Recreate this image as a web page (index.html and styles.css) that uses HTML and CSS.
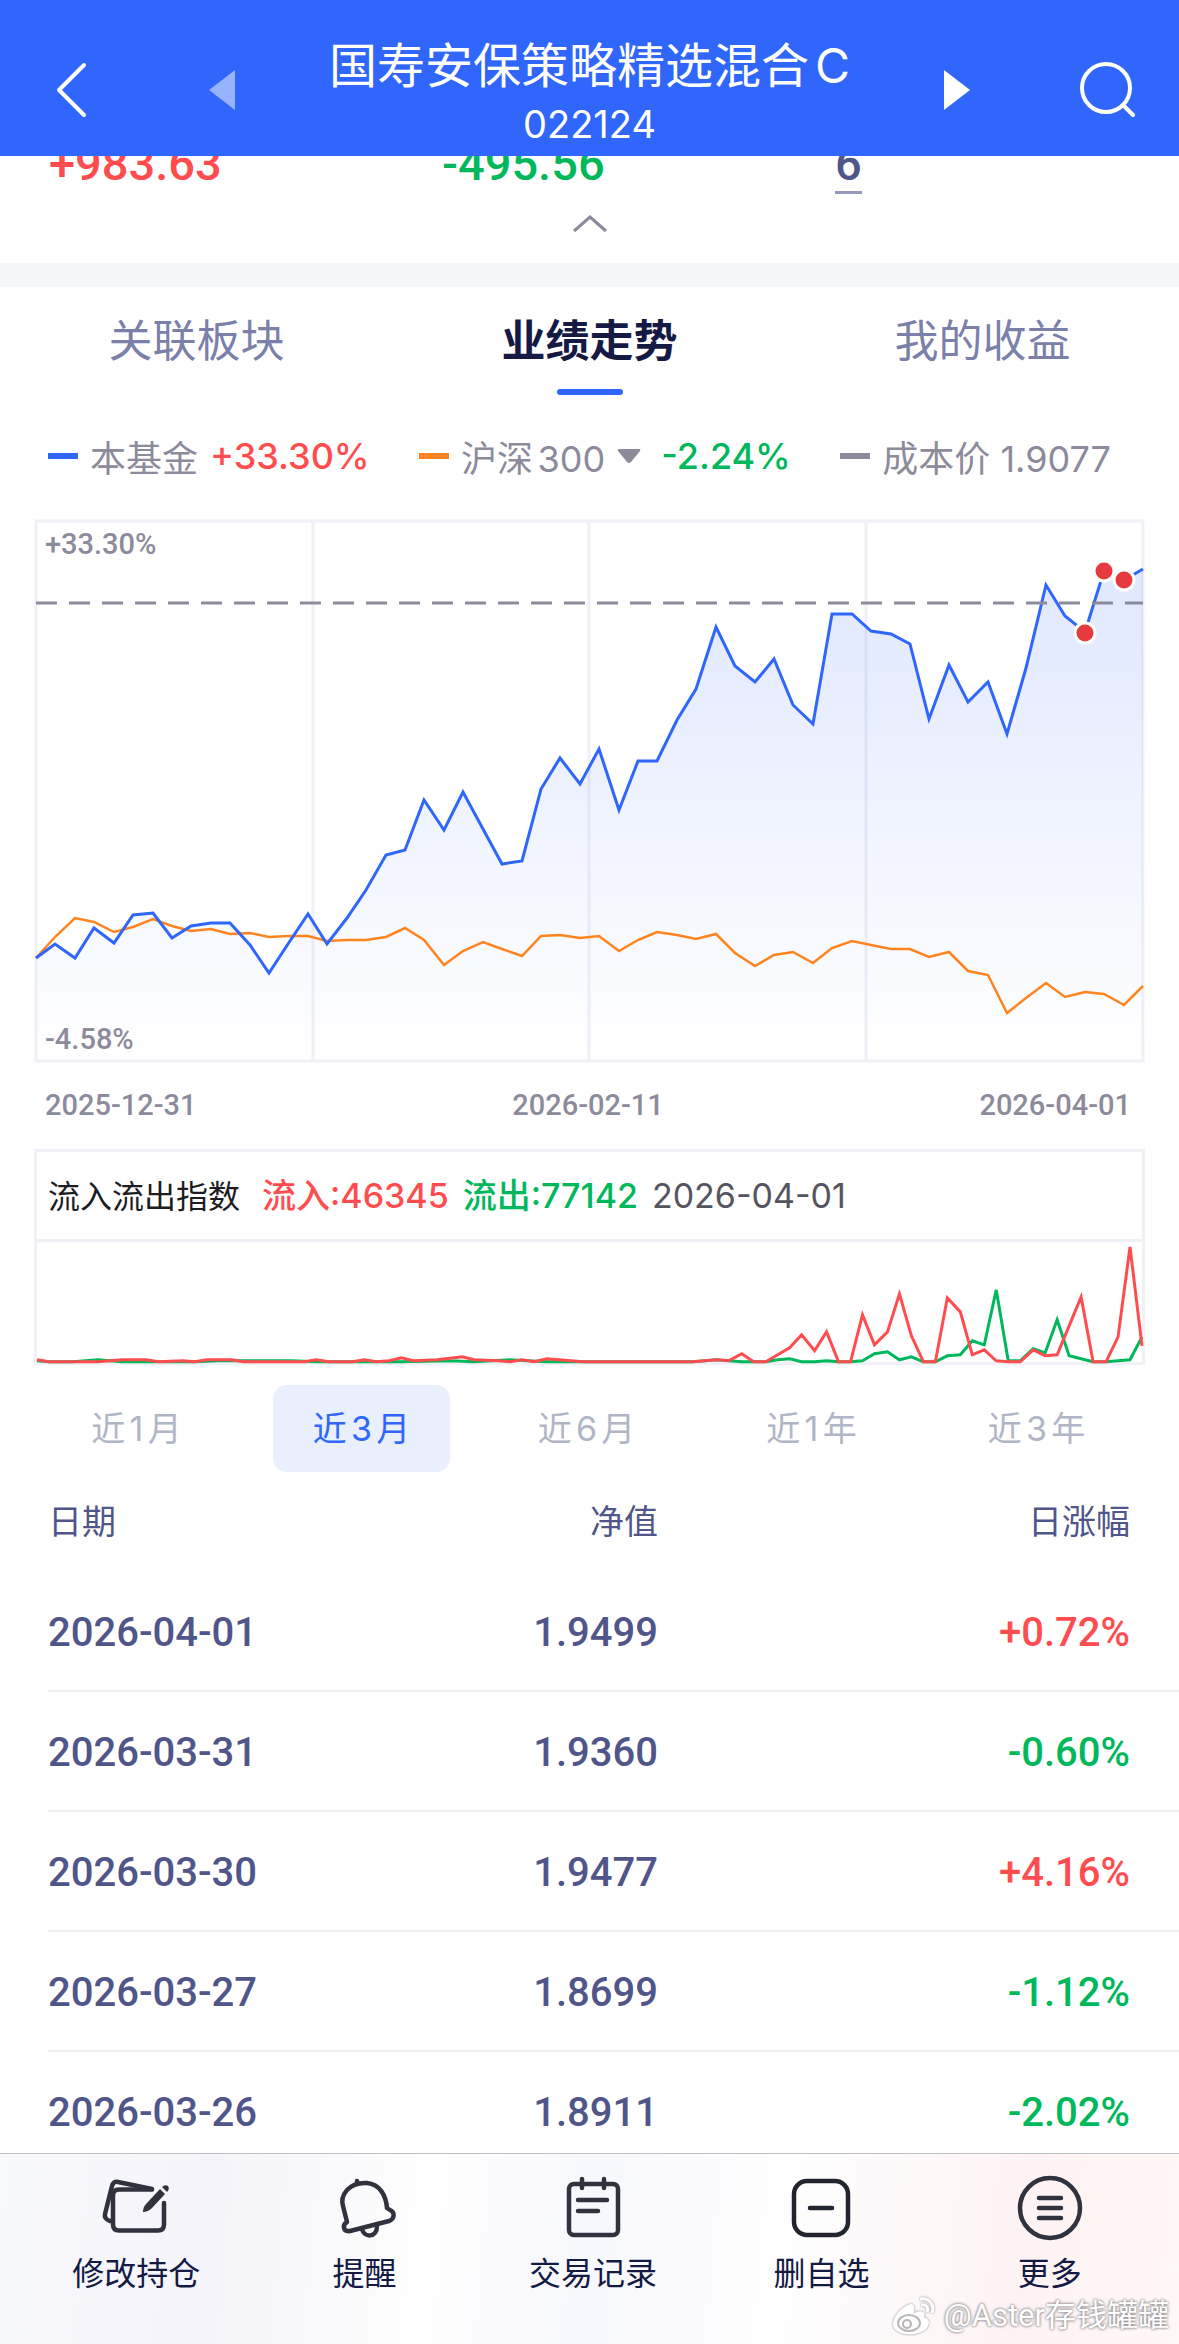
FILE: index.html
```html
<!DOCTYPE html>
<html lang="zh-CN">
<head>
    <meta charset="UTF-8">
    <meta name="viewport" content="width=device-width, initial-scale=1.0">
    <title>国寿安保策略精选混合C</title>
    <link rel="stylesheet" href="styles.css">
</head>
<body>
    <header class="top-bar">
        <button class="icon-btn" aria-label="返回">
            <svg width="60" height="60" viewBox="0 0 60 60"><path d="M42 5 17 30l25 25" fill="none" stroke="#fff" stroke-width="4" stroke-linecap="round" stroke-linejoin="round"/></svg>
        </button>
        <button class="icon-btn prev" aria-label="上一只">
            <svg width="28" height="40" viewBox="0 0 28 40"><path d="M27 0v40L1 20z" fill="#fff"/></svg>
        </button>
        <div class="fund-title">
            <h1>国寿安保策略精选混合C</h1>
            <p>022124</p>
        </div>
        <button class="icon-btn" aria-label="下一只">
            <svg width="28" height="40" viewBox="0 0 28 40"><path d="M1 0v40l26-20z" fill="#fff"/></svg>
        </button>
        <button class="icon-btn search" aria-label="搜索">
            <svg width="60" height="60" viewBox="0 0 60 60"><g fill="none" stroke="#fff" stroke-width="4" stroke-linecap="round"><circle cx="29" cy="28" r="24"/><path d="M46 45l10 10"/></g></svg>
        </button>
    </header>

    <main>
        <section class="holding">
            <div class="holding-values">
                <span class="up">+983.63</span>
                <span class="down">-495.56</span>
                <span><a href="#" class="days">6</a></span>
            </div>
            <button class="fold-btn" aria-label="收起">
                <svg width="36" height="20" viewBox="0 0 36 20"><path d="M2 17 18 3l16 14" fill="none" stroke="#8c8b9b" stroke-width="3"/></svg>
            </button>
        </section>

        <nav class="tabs">
            <a href="#" class="tab">关联板块</a>
            <a href="#" class="tab active">业绩走势</a>
            <a href="#" class="tab">我的收益</a>
        </nav>

        <div class="legend">
            <div class="legend-item"><i class="line blue"></i>本基金 <b class="up">+33.30%</b></div>
            <div class="legend-item"><i class="line orange"></i>沪深300 <svg class="caret" width="24" height="16" viewBox="0 0 24 16"><path d="M2 1h20q2 0 1 2L14 14q-2 2-4 0L1 3q-1-2 1-2z" fill="#8c8b9b"/></svg> <b class="down index-rate">-2.24%</b></div>
            <div class="legend-item"><i class="line gray"></i>成本价 1.9077</div>
        </div>

        <section class="trend">
            <svg class="trend-chart" viewBox="0 0 1107 540">
                <defs>
                    <linearGradient id="fill" x1="0" y1="0" x2="0" y2="1">
                        <stop offset="0" stop-color="#3366ff" stop-opacity="0.15"/>
                        <stop offset="0.7" stop-color="#3366ff" stop-opacity="0.045"/>
                        <stop offset="1" stop-color="#3366ff" stop-opacity="0"/>
                    </linearGradient>
                </defs>
                <path d="M0 0H1107V540H0zM277 0V540M553 0V540M830 0V540" fill="none" stroke="#f0f0f7" stroke-width="3"/>
                <polygon fill="url(#fill)" points="0,437 19,423 39,437 58,407 78,422 97,394 117,392 136,417 155,405 175,402 194,402 214,424 233,452 252,423 272,393 291,423 311,397 330,369 350,334 369,329 388,279 408,309 427,271 447,308 466,343 486,340 505,268 524,237 544,263 563,228 583,289 602,240 621,240 641,199 660,168 680,106 699,145 719,161 738,138 757,184 777,203 796,93 816,93 835,110 855,113 874,123 893,198 913,144 932,181 952,161 971,213 990,147 1010,64 1029,95 1049,111 1068,50 1088,59 1107,48 1107,540 0,540"/>
                <polyline class="plot" stroke="#ff8420" stroke-width="2.5" points="0,437 19,416 39,397 58,401 78,411 97,406 117,398 136,405 155,410 175,408 194,413 214,412 233,416 252,415 272,415 291,420 311,419 330,419 350,416 369,407 388,419 408,444 427,430 447,421 466,428 486,435 505,415 524,414 544,417 563,415 583,430 602,419 621,411 641,414 660,418 680,413 699,432 719,445 738,434 757,431 777,442 796,427 816,420 835,424 855,428 874,428 893,436 913,431 932,450 952,454 971,492 990,477 1010,462 1029,476 1049,471 1068,473 1088,484 1107,465"/>
                <polyline class="plot" stroke="#2f66fb" stroke-width="3" points="0,437 19,423 39,437 58,407 78,422 97,394 117,392 136,417 155,405 175,402 194,402 214,424 233,452 252,423 272,393 291,423 311,397 330,369 350,334 369,329 388,279 408,309 427,271 447,308 466,343 486,340 505,268 524,237 544,263 563,228 583,289 602,240 621,240 641,199 660,168 680,106 699,145 719,161 738,138 757,184 777,203 796,93 816,93 835,110 855,113 874,123 893,198 913,144 932,181 952,161 971,213 990,147 1010,64 1029,95 1049,111 1068,50 1088,59 1107,48"/>
                <path d="M0 82H1107" stroke="#8c8b9b" stroke-width="3" stroke-dasharray="21 12"/>
                <g fill="#e53b3f" stroke="#fff" stroke-width="3">
                    <circle cx="1049" cy="112" r="10"/>
                    <circle cx="1068" cy="50" r="10"/>
                    <circle cx="1088" cy="59" r="10"/>
                </g>
            </svg>
            <span class="scale scale-top">+33.30%</span>
            <span class="scale scale-bottom">-4.58%</span>
        </section>
        <div class="dates">
            <span>2025-12-31</span>
            <span>2026-02-11</span>
            <span>2026-04-01</span>
        </div>

        <section class="flow">
            <div class="flow-head">
                <span class="flow-name">流入流出指数</span>
                <span class="flow-num up">流入:46345</span>
                <span class="flow-num down">流出:77142</span>
                <span>2026-04-01</span>
            </div>
            <svg class="flow-chart" viewBox="0 0 1107 120">
                <polyline class="plot" stroke="#00b85c" stroke-width="3" points="0,119 12,120 36,120 61,118 85,120 158,120 182,119 231,119 255,119 280,120 316,120 365,120 414,119 438,120 474,118 510,120 560,120 657,120 669,119 681,118 693,119 706,120 730,120 742,118 754,117 766,120 779,120 791,119 803,120 815,120 827,119 839,112 852,110 864,118 876,115 888,120 900,120 912,114 925,113 937,99 949,103 961,48 973,119 985,119 998,107 1010,111 1022,78 1034,114 1046,117 1058,120 1071,120 1083,119 1095,118 1107,95"/>
                <polyline class="plot" stroke="#ff4d4f" stroke-width="3" points="0,118 12,120 61,120 73,119 85,118 109,118 122,120 146,119 158,120 170,118 195,118 207,120 268,120 280,118 292,120 316,120 328,118 340,120 353,119 365,116 377,119 401,118 426,115 438,118 462,119 474,120 486,118 498,120 511,117 523,118 547,120 657,120 669,119 681,118 693,119 706,112 718,120 730,120 742,113 754,106 766,93 779,109 791,90 803,120 815,120 827,73 839,103 852,90 864,52 876,94 888,120 900,120 912,56 925,70 937,113 949,108 961,119 973,120 985,120 998,108 1010,114 1022,113 1034,84 1046,55 1058,120 1071,120 1083,95 1095,5 1107,104"/>
            </svg>
        </section>

        <div class="ranges">
            <button class="range">近1月</button>
            <button class="range active">近3月</button>
            <button class="range">近6月</button>
            <button class="range">近1年</button>
            <button class="range">近3年</button>
        </div>

        <table class="history">
            <thead>
                <tr><th>日期</th><th>净值</th><th>日涨幅</th></tr>
            </thead>
            <tbody>
                <tr><td>2026-04-01</td><td>1.9499</td><td class="up">+0.72%</td></tr>
                <tr><td>2026-03-31</td><td>1.9360</td><td class="down">-0.60%</td></tr>
                <tr><td>2026-03-30</td><td>1.9477</td><td class="up">+4.16%</td></tr>
                <tr><td>2026-03-27</td><td>1.8699</td><td class="down">-1.12%</td></tr>
                <tr><td>2026-03-26</td><td>1.8911</td><td class="down">-2.02%</td></tr>
            </tbody>
        </table>
    </main>

    <nav class="bottom-bar">
        <button class="action">
            <svg viewBox="0 0 72 72"><g fill="none" stroke="#30333d" stroke-width="4.5" stroke-linecap="round" stroke-linejoin="round"><path d="M52 17.5H19q-6 0-6 6v29q0 6 6 6h39q6 0 6-6V31"/><path d="M52 17 18 10q-5-1-6 4L5 42q-1 5 5 7"/></g><path d="M60 17l5 5-13 14q-4 4-9 4 0-5 3-8z" fill="#30333d"/><path d="M62 15q3-3 6-1 2 3-1 6z" fill="#30333d"/></svg>
            修改持仓
        </button>
        <button class="action">
            <svg viewBox="0 0 72 72"><g fill="none" stroke="#30333d" stroke-width="4.5" stroke-linecap="round" stroke-linejoin="round"><path d="M18 50C13 53 14 60 21 59L60 49C66 47 66 40 61 38L58 36C57 24 51 12 38 11 19 10 11 24 14 34z"/><path d="M33 57c2 9 15 9 15-3M28 9v1"/></g></svg>
            提醒
        </button>
        <button class="action">
            <svg viewBox="0 0 72 72"><g fill="none" stroke="#30333d" stroke-width="4.5" stroke-linecap="round" stroke-linejoin="round"><rect x="12" y="12" width="49" height="51" rx="5"/><path d="M25 7v9M47 7v9M21 28h29M21 39h20"/></g></svg>
            交易记录
        </button>
        <button class="action">
            <svg viewBox="0 0 72 72"><g fill="none" stroke="#22242f" stroke-width="4.5" stroke-linecap="round"><rect x="9" y="9" width="54" height="54" rx="13"/><path d="M25 36h22"/></g></svg>
            删自选
        </button>
        <button class="action">
            <svg viewBox="0 0 72 72"><g fill="none" stroke="#30333d" stroke-width="4.5" stroke-linecap="round"><circle cx="36" cy="36" r="30"/><path d="M25 26h22M25 36h22M25 46h22"/></g></svg>
            更多
        </button>
        <div class="watermark">
            <svg width="44" height="40" viewBox="0 0 44 40"><path d="M18 8c-9 3-17 13-17 20 0 14 34 14 36-1 0-4-3-5-5-6 2-5-2-8-10-4 1-5 0-10-4-9z" fill="#fff"/><ellipse cx="17" cy="27" rx="11" ry="8" fill="none" stroke="#b9b5b8" stroke-width="2"/><circle cx="15" cy="28" r="4" fill="none" stroke="#b9b5b8" stroke-width="2"/><path d="M28 3c9-2 15 6 12 14M29 9c5-1 8 3 6 7" fill="none" stroke="#fff" stroke-width="3"/></svg>
            @Aster存钱罐罐
        </div>
    </nav>
</body>
</html>
```
FILE: styles.css
```css
* {
    margin: 0;
    padding: 0;
    box-sizing: border-box;
}

body {
    background-color: #fff;
    color: #8c8b9b;
    font-family: Inter, "Noto Sans CJK SC", sans-serif;
    font-size: 34px;
    text-autospace: normal;
}

button {
    border: none;
    background: none;
    font-family: inherit;
    cursor: pointer;
}

a {
    color: inherit;
    text-decoration: none;
}

svg {
    display: block;
}

.up {
    color: #ff4d4f;
}

.down {
    color: #00b85c;
}

/* Header */
.top-bar {
    position: sticky;
    top: 0;
    z-index: 2;
    display: grid;
    grid-template-columns: 166px 28px 1fr 28px 166px;
    align-items: center;
    height: 156px;
    padding: 24px 42px 0;
    background-color: #3066fb;
    color: #fff;
}

.icon-btn {
    justify-self: start;
}

.icon-btn.prev {
    opacity: 0.5;
}

.icon-btn.search {
    justify-self: end;
}

.fund-title {
    text-align: center;
}

.fund-title h1 {
    font-size: 48px;
    font-weight: 400;
    line-height: 68px;
}

.fund-title p {
    font-size: 38px;
    line-height: 48px;
}

/* Holding summary */
.holding {
    border-bottom: 24px solid #f5f7fb;
}

.holding-values {
    display: grid;
    grid-template-columns: repeat(3, 1fr);
    grid-template-rows: 32px;
    align-items: end;
    padding-bottom: 10px;
    overflow: hidden;
    font-family: Roboto, sans-serif;
    font-size: 47px;
    font-weight: 500;
    line-height: 48px;
}

.holding-values span {
    padding-left: 49px;
}

.days {
    color: #50558a;
    border-bottom: 3px solid #9499bd;
}

.fold-btn {
    display: block;
    margin: 0 auto;
    padding: 16px 40px 29px;
}

/* Tabs */
.tabs {
    display: grid;
    grid-template-columns: repeat(3, 1fr);
    text-align: center;
}

.tab {
    height: 108px;
    color: #7b80aa;
    font-size: 44px;
    line-height: 108px;
}

.tab.active {
    color: #151a45;
    font-weight: 700;
}

.tab.active::after {
    content: "";
    display: block;
    width: 66px;
    height: 6px;
    margin: -6px auto 0;
    border-radius: 3px;
    background-color: #2f66fb;
}

/* Chart */
.legend {
    display: flex;
    justify-content: space-between;
    align-items: center;
    height: 126px;
    padding: 0 68px 4px 48px;
    font-size: 36px;
}

.legend-item {
    display: flex;
    align-items: center;
    gap: 12px;
}

.legend b {
    font-weight: 500;
}

.legend .index-rate {
    padding-left: 8px;
}

.line {
    width: 30px;
    height: 6px;
}

.line.blue {
    background-color: #2f66fb;
}

.line.orange {
    background-color: #ff8420;
}

.line.gray {
    background-color: #8c8b9b;
}

.trend {
    position: relative;
    margin: 0 36px;
}

.trend-chart {
    width: 100%;
    overflow: visible;
}

.plot {
    fill: none;
}

.scale,
.dates {
    font-family: Roboto, sans-serif;
    font-size: 29px;
    font-weight: 500;
}

.scale {
    position: absolute;
    left: 9px;
    line-height: 36px;
}

.scale-top {
    top: 5px;
}

.scale-bottom {
    bottom: 4px;
}

.dates {
    display: flex;
    justify-content: space-between;
    padding: 0 48px 0 45px;
    line-height: 88px;
}

.flow {
    margin: 0 34px;
    border: 3px solid #f0f0f7;
}

.flow-head {
    display: flex;
    align-items: baseline;
    gap: 14px;
    height: 90px;
    padding: 0 11px;
    border-bottom: 3px solid #f0f0f7;
    color: #55555f;
    font-size: 34px;
    line-height: 88px;
    text-autospace: no-autospace;
}

.flow-name {
    padding-right: 8px;
    color: #1c1c22;
    font-size: 32px;
}

.flow-num {
    font-weight: 500;
}

.flow-chart {
    width: 100%;
    overflow: visible;
}

/* Range switch */
.ranges {
    display: grid;
    grid-template-columns: repeat(5, 1fr);
    padding: 20px 30px 0 24px;
}

.range {
    height: 87px;
    margin: 0 24px;
    padding-bottom: 3px;
    border-radius: 14px;
    color: #b0b6c6;
    font-size: 34px;
}

.range.active {
    background-color: #e9effd;
    color: #2f66fb;
}

/* History table */
.history {
    width: 100%;
    padding-left: 48px;
    border-spacing: 0;
    color: #50558a;
    table-layout: fixed;
}

.history th {
    height: 100px;
    padding-bottom: 4px;
    font-size: 34px;
    font-weight: 400;
}

.history td {
    height: 120px;
    padding-top: 4px;
    border-bottom: 2px solid #ededf0;
    font-family: Roboto, sans-serif;
    font-size: 40px;
    font-weight: 500;
}

.history th:first-child,
.history td:first-child {
    text-align: left;
}

.history th:nth-child(2),
.history td:nth-child(2) {
    padding-right: 144px;
    text-align: right;
}

.history th:last-child,
.history td:last-child {
    padding-right: 49px;
    text-align: right;
}

/* Bottom actions */
.bottom-bar {
    position: fixed;
    right: 0;
    bottom: 0;
    left: 0;
    display: grid;
    grid-template-columns: repeat(5, 1fr);
    height: 191px;
    padding: 18px 15px 0 22px;
    border-top: 1px solid #c0c0c4;
    background: linear-gradient(95deg, #f8f9fd 0%, #f4f4fa 18%, #fefefe 36%, #f7f8fd 50%, #fefefe 66%, #fef3f4 86%, #fff7f6 100%);
}

.action {
    display: flex;
    flex-direction: column;
    align-items: center;
    color: #151a45;
    font-size: 32px;
    line-height: 60px;
}

.action svg {
    width: 72px;
    height: 72px;
}

.watermark {
    position: absolute;
    right: 10px;
    bottom: 6px;
    display: flex;
    align-items: center;
    gap: 8px;
    color: #fff;
    font-family: Roboto, "Noto Sans CJK SC", sans-serif;
    font-size: 31px;
    line-height: 44px;
    text-shadow: 0 0 3px #8c888a, 0 0 3px #8c888a;
    text-autospace: no-autospace;
}

.watermark svg {
    filter: drop-shadow(0 0 1px #8c888a);
}
```
